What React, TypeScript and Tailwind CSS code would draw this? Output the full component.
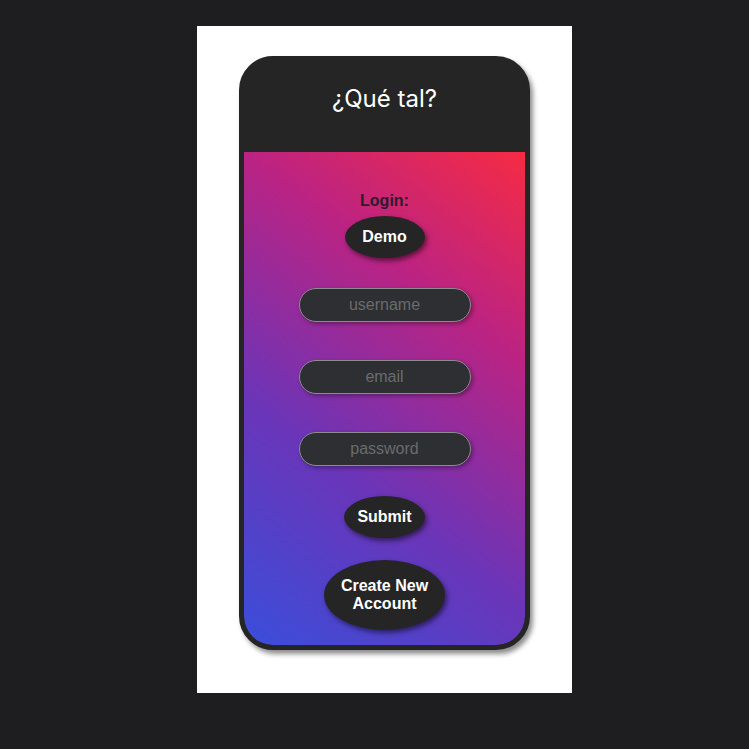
import { useState } from 'react';

export default function App() {
  const [username, setUsername] = useState('');
  const [email, setEmail] = useState('');
  const [password, setPassword] = useState('');

  return (
    <div className="min-h-screen w-full bg-[#1e1e20] pt-[26px] pl-[197px]">
      <div className="w-[375px] h-[667px] bg-white flex justify-center pt-[30px]">
        {/* phone frame */}
        <div className="w-[291px] h-[594px] rounded-[34px] border-[5px] border-[#252525] bg-[#252525] overflow-hidden flex flex-col shadow-[3px_4px_5px_rgba(0,0,0,0.45)]">
          {/* Header */}
          <header className="h-[91px] shrink-0 flex justify-center pt-[23px]">
            <h1 className="text-white text-[24px] leading-[29px] font-normal font-['Inter',sans-serif]">
              ¿Qué tal?
            </h1>
          </header>

          {/* Form area */}
          <main className="flex-1 rounded-b-[28px] bg-[linear-gradient(37deg,#3a4edb_0%,#6a35b8_35%,#bb2383_70%,#f62b43_100%)] flex flex-col items-center pt-[40px] font-['Liberation_Sans',Arial,sans-serif]">
            <p className="text-[16px] leading-[18px] font-bold text-[#2b1b2d]">Login:</p>

            <button className="mt-[6px] w-[80px] h-[42px] rounded-[50%] bg-[#252525] text-white text-[16px] font-bold shadow-[2px_3px_5px_rgba(0,0,0,0.5)]">
              Demo
            </button>

            <div className="mt-[30px] flex flex-col gap-[38px]">
              <input
                value={username}
                onChange={(e) => setUsername(e.target.value)}
                placeholder="username"
                className="w-[172px] h-[34px] rounded-full border border-[#8c8c8c] bg-[#2d2f33] text-center text-[16px] text-white placeholder:text-[#6b6b6b] outline-none shadow-[2px_2px_4px_rgba(0,0,0,0.35)]"
              />
              <input
                value={email}
                onChange={(e) => setEmail(e.target.value)}
                placeholder="email"
                className="w-[172px] h-[34px] rounded-full border border-[#8c8c8c] bg-[#2d2f33] text-center text-[16px] text-white placeholder:text-[#6b6b6b] outline-none shadow-[2px_2px_4px_rgba(0,0,0,0.35)]"
              />
              <input
                type="password"
                value={password}
                onChange={(e) => setPassword(e.target.value)}
                placeholder="password"
                className="w-[172px] h-[34px] rounded-full border border-[#8c8c8c] bg-[#2d2f33] text-center text-[16px] text-white placeholder:text-[#6b6b6b] outline-none shadow-[2px_2px_4px_rgba(0,0,0,0.35)]"
              />
            </div>

            <button className="mt-[30px] w-[81px] h-[42px] rounded-[50%] bg-[#252525] text-white text-[16px] font-bold shadow-[2px_3px_5px_rgba(0,0,0,0.5)]">
              Submit
            </button>

            <button className="mt-[22px] w-[121px] h-[70px] rounded-[50%] bg-[#252525] text-white text-[16px] leading-[18px] font-bold shadow-[2px_3px_5px_rgba(0,0,0,0.5)]">
              Create New
              <br />
              Account
            </button>
          </main>
        </div>
      </div>
    </div>
  );
}
